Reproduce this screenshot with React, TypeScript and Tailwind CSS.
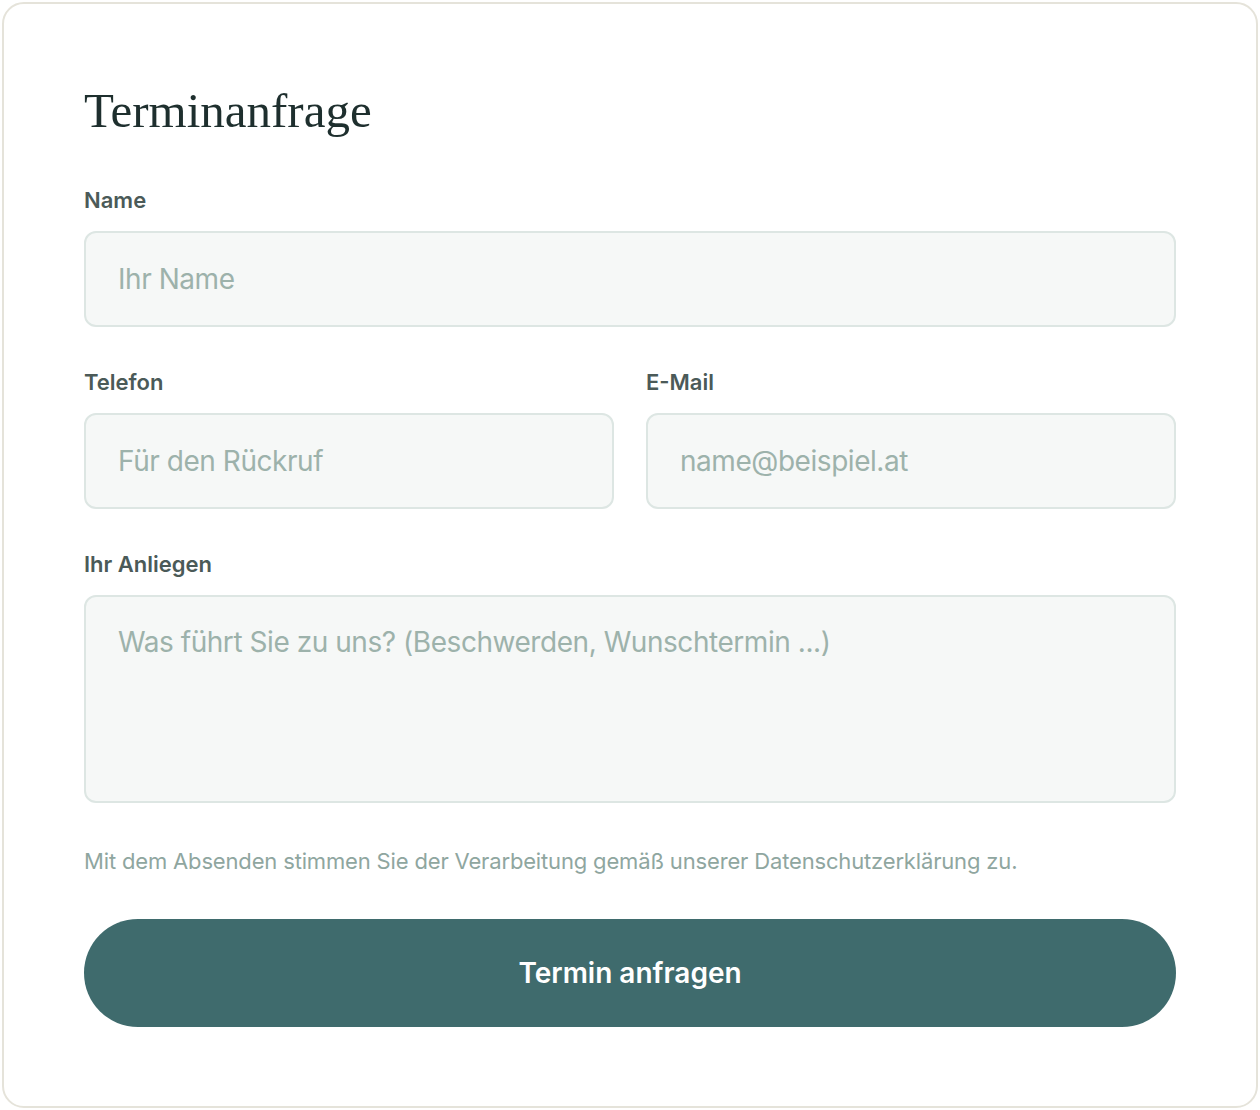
import React from "react";

const sans = "font-['Inter','Noto_Sans',sans-serif]";

function Label({ children }: { children: React.ReactNode }) {
  return (
    <label className={`block text-[22px] leading-[28px] font-semibold text-[#4b5a58] mb-[17px] ${sans}`}>
      {children}
    </label>
  );
}

const fieldCls = `block w-full rounded-[12px] border-2 border-[#dde6e3] bg-[#f6f8f7] px-[32px] text-[28px] leading-[42px] tracking-[-0.45px] text-[#2b3a38] placeholder:text-[#9db2ab] outline-none ${sans}`;

export default function App() {
  return (
    <div className="w-[1260px] h-[1110px] bg-white p-[2px]">
      <div className="h-[1106px] rounded-[22px] border-2 border-[#e5e3da] bg-white px-[80px] pt-[80px] pb-[80px] flex flex-col">
        <h1 className="font-['Liberation_Serif','Times_New_Roman',serif] text-[49px] leading-[54px] text-[#1e2f2e] font-normal mb-[48px]">
          Terminanfrage
        </h1>

        <div className="mb-[41px]">
          <Label>Name</Label>
          <input className={`${fieldCls} h-[96px] py-[26px]`} placeholder="Ihr Name" />
        </div>

        <div className="grid grid-cols-2 gap-[32px] mb-[41px]">
          <div>
            <Label>Telefon</Label>
            <input className={`${fieldCls} h-[96px] py-[26px]`} placeholder="Für den Rückruf" />
          </div>
          <div>
            <Label>E-Mail</Label>
            <input className={`${fieldCls} h-[96px] py-[26px]`} placeholder="name@beispiel.at" />
          </div>
        </div>

        <div>
          <Label>Ihr Anliegen</Label>
          <textarea
            className={`${fieldCls} h-[208px] py-[24px] resize-none`}
            placeholder="Was führt Sie zu uns? (Beschwerden, Wunschtermin ...)"
          />
        </div>

        <p className={`mt-[43px] text-[22px] leading-[30px] tracking-[-0.16px] text-[#8fa69f] ${sans}`}>
          Mit dem Absenden stimmen Sie der Verarbeitung gemäß unserer Datenschutzerklärung zu.
        </p>

        <button
          className={`mt-[43px] h-[108px] w-full shrink-0 rounded-full bg-[#3f6b6d] text-white text-[28px] font-semibold ${sans}`}
        >
          Termin anfragen
        </button>
      </div>
    </div>
  );
}
